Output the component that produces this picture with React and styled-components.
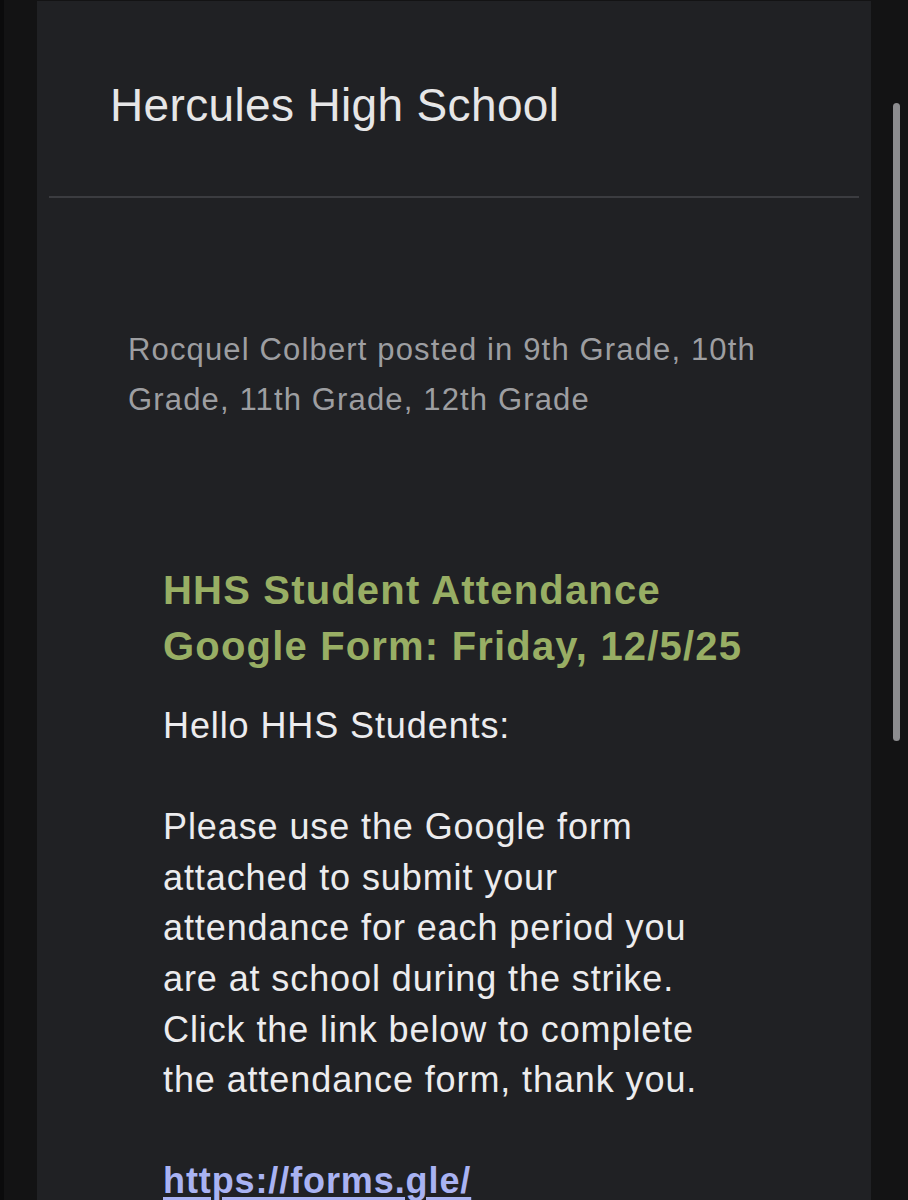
import React from "react";
import styled, { createGlobalStyle } from "styled-components";

const GlobalStyle = createGlobalStyle`
  html, body {
    margin: 0;
    padding: 0;
    height: 100%;
    overflow: hidden;
    background: #131314;
  }
  body {
    font-family: "Liberation Sans", Arial, Helvetica, sans-serif;
    -webkit-font-smoothing: antialiased;
  }
  #root { height: 100%; }
`;

const Page = styled.div`
  display: flex;
  height: 100vh;
  background: #131314;
`;

const LeftGutter = styled.div`
  width: 33px;
  flex: none;
  border-left: 4px solid #0b0b0c;
  background: #131314;
`;

const Card = styled.main`
  flex: 1;
  margin-top: 1px;
  background: #202124;
  display: flex;
  flex-direction: column;
  overflow: hidden;
`;

const RightGutter = styled.div`
  width: 37px;
  flex: none;
  background: #131314;
  padding: 103px 0 0 22px;
  box-sizing: border-box;
`;

const ScrollThumb = styled.div`
  width: 7px;
  height: 638px;
  border-radius: 4px;
  background: #8d8d90;
`;

const Header = styled.header`
  padding: 78px 12px 0 12px;
`;

const SchoolTitle = styled.h1`
  margin: 0 0 65px 61px;
  font-size: 46px;
  line-height: 52px;
  font-weight: 400;
  letter-spacing: 0.35px;
  color: #e6e6e7;
`;

const Divider = styled.hr`
  margin: 0;
  border: none;
  height: 2px;
  background: #3b3c40;
`;

const Post = styled.article`
  padding: 127px 0 0 91px;
  display: flex;
  flex-direction: column;
`;

const Meta = styled.p`
  margin: 0;
  font-size: 31px;
  line-height: 50px;
  letter-spacing: 1.15px;
  color: #9d9ea1;
`;

const Content = styled.section`
  padding: 137px 0 0 35px;
`;

const Heading = styled.h2`
  margin: 0 0 27px;
  font-size: 40px;
  line-height: 56px;
  font-weight: 700;
  letter-spacing: 1.18px;
  color: #98ae64;
`;

const BodyText = styled.p`
  margin: 0 0 50.6px;
  font-size: 36px;
  line-height: 50.6px;
  letter-spacing: 0.9px;
  color: #ececee;
`;

const Link = styled.a`
  font-weight: 700;
  color: #a9b3f3;
  text-decoration: underline;
  text-decoration-thickness: 3px;
  text-underline-offset: 4px;
`;

export default function App() {
  return (
    <>
      <GlobalStyle />
      <Page>
        <LeftGutter />
        <Card>
          <Header>
            <SchoolTitle>Hercules High School</SchoolTitle>
            <Divider />
          </Header>
          <Post>
            <Meta>
              Rocquel Colbert posted in 9th Grade, 10th
              <br />
              Grade, 11th Grade, 12th Grade
            </Meta>
            <Content>
              <Heading>
                HHS Student Attendance
                <br />
                Google Form: Friday, 12/5/25
              </Heading>
              <BodyText>Hello HHS Students:</BodyText>
              <BodyText>
                Please use the Google form
                <br />
                attached to submit your
                <br />
                attendance for each period you
                <br />
                are at school during the strike.
                <br />
                Click the link below to complete
                <br />
                the attendance form, thank you.
              </BodyText>
              <BodyText>
                <Link href="#">https://forms.gle/</Link>
              </BodyText>
            </Content>
          </Post>
        </Card>
        <RightGutter>
          <ScrollThumb />
        </RightGutter>
      </Page>
    </>
  );
}
